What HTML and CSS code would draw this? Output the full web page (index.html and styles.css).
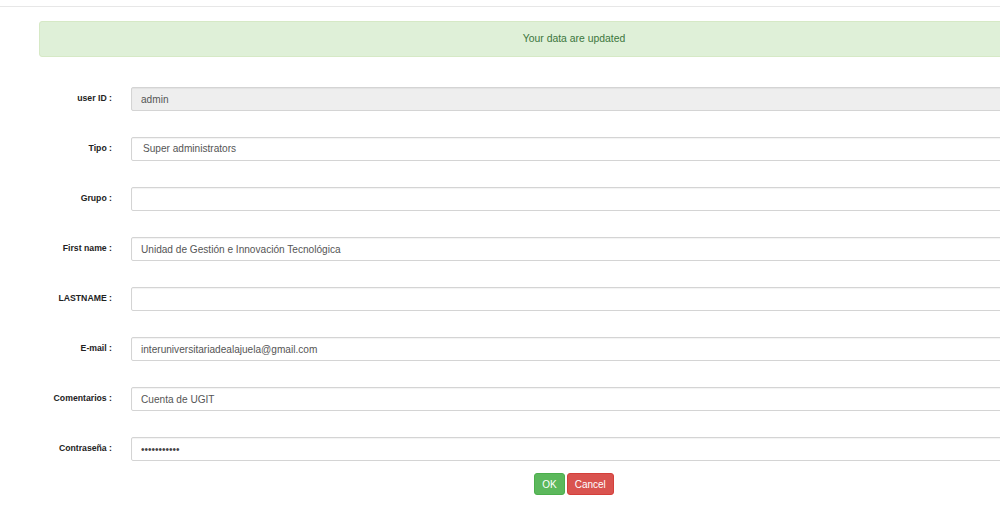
FILE: index.html
```html
<!DOCTYPE html>
<html lang="es">

<head>
    <meta charset="UTF-8">
    <meta name="viewport" content="width=device-width, initial-scale=1.0">
    <title>Usuario</title>
    <link rel="stylesheet" href="styles.css">
</head>

<body>
    <div class="topbar"></div>

    <div class="container">
        <div class="alert">Your data are updated</div>

        <form id="userForm" class="user-form">
            <!-- user ID -->
            <div class="row">
                <label for="userId">user ID :</label>
                <input type="text" id="userId" class="readonly" value="admin" readonly>
            </div>

            <!-- Tipo -->
            <div class="row">
                <label for="tipo">Tipo :</label>
                <div class="select" id="tipo">Super administrators</div>
            </div>

            <!-- Grupo -->
            <div class="row">
                <label for="grupo">Grupo :</label>
                <input type="text" id="grupo" value="">
            </div>

            <!-- First name -->
            <div class="row">
                <label for="firstName">First name :</label>
                <input type="text" id="firstName" value="Unidad de Gestión e Innovación Tecnológica">
            </div>

            <!-- LASTNAME -->
            <div class="row">
                <label for="lastName">LASTNAME :</label>
                <input type="text" id="lastName" value="">
            </div>

            <!-- E-mail -->
            <div class="row">
                <label for="email">E-mail :</label>
                <input type="text" id="email" value="interuniversitariadealajuela@gmail.com">
            </div>

            <!-- Comentarios -->
            <div class="row">
                <label for="comentarios">Comentarios :</label>
                <input type="text" id="comentarios" value="Cuenta de UGIT">
            </div>

            <!-- Contraseña -->
            <div class="row">
                <label for="password">Contraseña :</label>
                <input type="password" id="password" value="adminpasswd">
            </div>

            <div class="buttons">
                <button type="button" class="btn btn-ok">OK</button>
                <button type="button" class="btn btn-cancel">Cancel</button>
            </div>
        </form>
    </div>
</body>

</html>
```

FILE: styles.css
```css
body {
    font-family: "Liberation Sans", Arial, sans-serif;
    margin: 0;
    color: #333;
    overflow: hidden;
    background: #fff;
}

.topbar {
    height: 6px;
    border-bottom: 1px solid #e7e7e7;
}

.container {
    margin-left: 39px;
    width: 1070px;
}

.alert {
    margin-top: 14px;
    height: 36px;
    box-sizing: border-box;
    line-height: 34px;
    background-color: #dff0d8;
    border: 1px solid #d6e9c6;
    border-radius: 3px;
    color: #3c763d;
    font-size: 10.4px;
    text-align: center;
}

.user-form {
    margin-top: 30px;
}

.row {
    display: grid;
    grid-template-columns: 73px 1fr;
    column-gap: 19px;
    margin-bottom: 26px;
}

.row label {
    text-align: right;
    font-size: 8.7px;
    font-weight: bold;
    color: #222;
    padding-top: 6px;
}

.row input,
.row .select {
    height: 24px;
    box-sizing: border-box;
    border: 1px solid #d4d4d4;
    border-radius: 2px;
    padding: 0 9px;
    font-family: inherit;
    font-size: 10.1px;
    color: #555;
    background: #fff;
    box-shadow: inset 0 1px 1px rgba(0, 0, 0, 0.05);
}

.row .select {
    line-height: 22px;
    padding-left: 11px;
}

.row input.readonly {
    background-color: #eee;
}

.row input[type="password"] {
    font-size: 10px;
    color: #444;
}

.buttons {
    margin-top: -14px;
    display: flex;
    justify-content: center;
    gap: 2px;
}

.btn {
    height: 22px;
    padding: 0 7px;
    border: 1px solid transparent;
    border-radius: 3px;
    color: #fff;
    font-family: inherit;
    font-size: 10px;
    cursor: pointer;
}

.btn-ok {
    background-color: #5cb85c;
    border-color: #4cae4c;
}

.btn-cancel {
    background-color: #d9534f;
    border-color: #d43f3a;
}
```
